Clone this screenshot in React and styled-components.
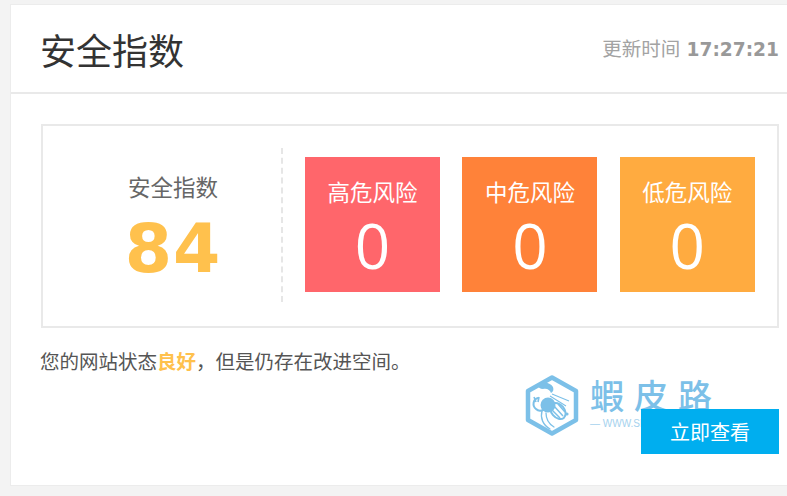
import styled, { createGlobalStyle } from "styled-components";

const GlobalStyle = createGlobalStyle`
  html, body {
    margin: 0;
    padding: 0;
    background: #f3f3f3;
  }
`;

const Page = styled.div`
  width: 787px;
  height: 496px;
  overflow: hidden;
  padding: 4px 0 0 10px;
  box-sizing: border-box;
  font-family: "Noto Sans CJK SC", "Liberation Sans", sans-serif;
`;

const Panel = styled.div`
  position: relative;
  width: 777px;
  height: 482px;
  box-sizing: border-box;
  background: #fff;
  border: 1px solid #ececec;
  border-right: none;
`;

const Header = styled.div`
  display: flex;
  justify-content: space-between;
  align-items: center;
  height: 87px;
  padding: 0 8px 0 29px;
  border-bottom: 2px solid #e9e9e9;
`;

const Title = styled.h1`
  margin: 0;
  font-size: 36px;
  font-weight: 400;
  line-height: 1;
  color: #333;
`;

const UpdateTime = styled.div`
  font-size: 19.5px;
  color: #a3a3a3;
  line-height: 1;

  b {
    margin-left: 2px;
    font-family: "DejaVu Sans", sans-serif;
    font-weight: 700;
    font-size: 18.6px;
    color: #999;
  }
`;

const Body = styled.div`
  padding: 30px 8px 0 30px;
`;

const ScoreBox = styled.div`
  display: flex;
  align-items: center;
  height: 204px;
  box-sizing: border-box;
  padding-bottom: 3px;
  border: 2px solid #e9e9e9;
`;

const Score = styled.div`
  flex: none;
  width: 240px;
  height: 154px;
  box-sizing: border-box;
  border-right: 2px dashed #e6e6e6;
  display: flex;
  flex-direction: column;
  align-items: center;
  padding: 22px 0 0 22px;
`;

const ScoreLabel = styled.div`
  font-size: 22.5px;
  line-height: 32px;
  color: #666;
`;

const ScoreValue = styled.div`
  font-family: "DejaVu Sans", sans-serif;
  font-weight: 700;
  font-size: 68px;
  line-height: 72px;
  margin-top: 11px;
  letter-spacing: 1px;
  color: #ffc14d;
`;

const Tiles = styled.div`
  display: flex;
  gap: 22.4px;
  margin-left: 22px;
`;

const Tile = styled.div`
  width: 135px;
  height: 135px;
  background: ${(p) => p.$color};
  color: #fff;
  display: flex;
  flex-direction: column;
  align-items: center;
  padding-top: 18px;
  box-sizing: border-box;
`;

const TileLabel = styled.div`
  font-size: 22.5px;
  line-height: 32px;
`;

const TileValue = styled.div`
  font-family: "Open Sans", sans-serif;
  font-size: 62px;
  line-height: 66px;
  margin-top: 5px;
`;

const Status = styled.p`
  margin: 19px 0 0 -1px;
  font-size: 19.5px;
  line-height: 28px;
  color: #555;

  em {
    font-style: normal;
    font-weight: 700;
    color: #ffc14d;
  }
`;

const Watermark = styled.div`
  position: absolute;
  left: 514px;
  top: 370px;
  display: flex;
  align-items: flex-start;
  gap: 11px;
  color: #7cc0e8;
`;

const WatermarkName = styled.div`
  font-size: 34px;
  line-height: 40px;
  letter-spacing: 10px;
  font-weight: 500;
  white-space: nowrap;
`;

const WatermarkUrl = styled.div`
  font-family: "Liberation Sans", sans-serif;
  font-size: 10px;
  line-height: 12px;
  margin-top: 3px;
  color: #a5d2ee;
  white-space: nowrap;
`;

const ViewButton = styled.button`
  position: absolute;
  left: 630px;
  top: 404px;
  width: 138px;
  height: 45px;
  border: none;
  padding: 0;
  background: #00aeef;
  color: #fff;
  font-family: inherit;
  font-size: 20px;
`;

const Logo = () => (
  <svg width="54" height="61" viewBox="0 0 54 61" fill="none">
    <path
      d="M27 2.5 L51 16 V45 L27 58.5 L3 45 V16 Z"
      stroke="#7cc0e8"
      strokeWidth="4.5"
      strokeLinejoin="round"
    />
    {/* big claw */}
    <path d="M12 10 C17 6 25 7 28 12 C29 15 28 17 26 18 C25 15 22 13 18 14 C15 14 13 12 12 10 Z" fill="#7cc0e8" />
    {/* small pincer */}
    <path d="M13 23 C8 24 7 31 11 34 C13 36 16 36 18 35" stroke="#7cc0e8" strokeWidth="2" strokeLinecap="round" />
    <path d="M9 22 L11 27 M14 22 L13 27" stroke="#7cc0e8" strokeWidth="1.6" />
    {/* body and striped tail */}
    <circle cx="23" cy="30" r="7.5" fill="#7cc0e8" />
    <ellipse cx="33" cy="36" rx="6.5" ry="9" stroke="#7cc0e8" strokeWidth="2" transform="rotate(-40 33 36)" />
    <path d="M29 31 L38 41 M27 35 L35 43 M33 29 L40 37" stroke="#7cc0e8" strokeWidth="1.5" />
    {/* legs */}
    <path d="M17 36 C15 43 18 50 25 54 M21 38 C21 44 24 49 29 52" stroke="#7cc0e8" strokeWidth="1.3" strokeLinecap="round" />
    {/* antennae */}
    <path d="M27 19 L44 26 M25 21 L41 31" stroke="#7cc0e8" strokeWidth="1.1" />
    <circle cx="42" cy="39" r="1.6" fill="#7cc0e8" />
  </svg>
);

const tiles = [
  { label: "高危风险", value: 0, color: "#ff666b" },
  { label: "中危风险", value: 0, color: "#ff8239" },
  { label: "低危风险", value: 0, color: "#ffab40" },
];

export default function App() {
  return (
    <Page>
      <GlobalStyle />
      <Panel>
        <Header>
          <Title>安全指数</Title>
          <UpdateTime>
            更新时间 <b>17:27:21</b>
          </UpdateTime>
        </Header>
        <Body>
          <ScoreBox>
            <Score>
              <ScoreLabel>安全指数</ScoreLabel>
              <ScoreValue>84</ScoreValue>
            </Score>
            <Tiles>
              {tiles.map((t) => (
                <Tile key={t.label} $color={t.color}>
                  <TileLabel>{t.label}</TileLabel>
                  <TileValue>{t.value}</TileValue>
                </Tile>
              ))}
            </Tiles>
          </ScoreBox>
          <Status>
            您的网站状态<em>良好</em>，但是仍存在改进空间。
          </Status>
        </Body>
        <Watermark>
          <Logo />
          <div>
            <WatermarkName>蝦皮路</WatermarkName>
            <WatermarkUrl>— WWW.SH</WatermarkUrl>
          </div>
        </Watermark>
        <ViewButton>立即查看</ViewButton>
      </Panel>
    </Page>
  );
}
